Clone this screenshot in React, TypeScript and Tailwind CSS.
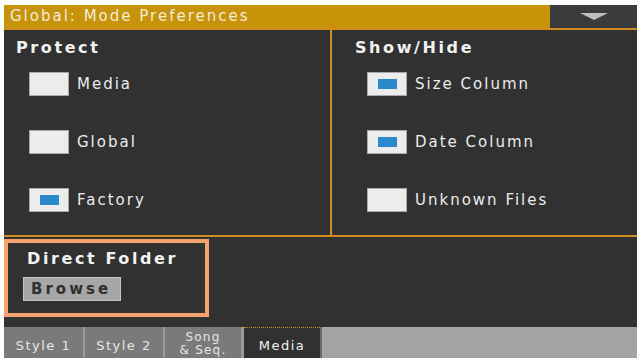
import React from "react";

const font = { fontFamily: '"DejaVu Sans", "Liberation Sans", sans-serif' };

function Check({ on, label }: { on: boolean; label: string }) {
  return (
    <div className="flex items-center h-[24px]">
      <div className="w-[40px] h-[24px] bg-[#ececec] border border-[#a9a9a9] flex items-center justify-center">
        {on && <div className="w-[19px] h-[10px] bg-[#2a8acb]" />}
      </div>
      <span className="ml-[8px] text-[15px] text-[#ececec] tracking-[2px]">{label}</span>
    </div>
  );
}

export default function App() {
  return (
    <div className="w-[643px] h-[364px] bg-white pt-[5px] pl-[4px]" style={font}>
      <div className="w-[633px] h-[353px] flex flex-col bg-[#313131]">
        {/* header */}
        <div className="h-[23px] flex bg-[#c79308] shrink-0">
          <div className="flex-1 flex items-center pl-[6px] text-[15px] text-[#f3ecd6] tracking-[2px]">
            Global: Mode Preferences
          </div>
          <div className="w-[87px] bg-[#3b3b3b] flex items-center justify-center">
            <svg width="28" height="8" viewBox="0 0 28 8">
              <polygon points="0,0 28,0 14,7" fill="#bdbdbd" />
            </svg>
          </div>
        </div>
        <div className="h-[2px] bg-[#d08d1d] shrink-0" />
        {/* main */}
        <div className="h-[205px] flex shrink-0">
          <div className="w-[326px] pl-[12px] pt-[6px]">
            <div className="text-[16px] font-bold text-[#f2f2f2] tracking-[2.6px]">Protect</div>
            <div className="pl-[13px] pt-[12px] flex flex-col gap-[34px]">
              <Check on={false} label="Media" />
              <Check on={false} label="Global" />
              <Check on={true} label="Factory" />
            </div>
          </div>
          <div className="w-[2px] bg-[#d08d1d]" />
          <div className="flex-1 pl-[23px] pt-[6px]">
            <div className="text-[16px] font-bold text-[#f2f2f2] tracking-[2.6px]">Show/Hide</div>
            <div className="pl-[12px] pt-[12px] flex flex-col gap-[34px]">
              <Check on={true} label="Size Column" />
              <Check on={true} label="Date Column" />
              <Check on={false} label="Unknown Files" />
            </div>
          </div>
        </div>
        <div className="h-[2px] bg-[#d08d1d] shrink-0" />
        {/* bottom area */}
        <div className="flex-1 pt-[2px]">
          <div className="w-[205px] h-[78px] border-[4px] border-[#f6a26f] pl-[15px] pt-[4px]">
            <div className="pl-[4px] text-[16px] font-bold text-[#f2f2f2] tracking-[2.6px]">Direct Folder</div>
            <div className="mt-[6px] w-[98px] h-[24px] bg-[#a6a6a6] border border-[#c4c4c4] flex items-center pl-[7px] text-[15px] font-bold text-[#2f2f2f] tracking-[3px]">
              Browse
            </div>
          </div>
        </div>
        {/* tabs */}
        <div className="h-[31px] flex shrink-0 bg-[#a3a3a3]">
          <div className="w-[79px] bg-[#7a7a7a] flex items-end justify-center pb-[3px] text-[13px] text-[#e6e6e6] tracking-[1.5px]">Style 1</div>
          <div className="w-[2px] bg-[#9a9a9a]" />
          <div className="w-[78px] bg-[#7a7a7a] flex items-end justify-center pb-[3px] text-[13px] text-[#e6e6e6] tracking-[1.5px]">Style 2</div>
          <div className="w-[2px] bg-[#9a9a9a]" />
          <div className="w-[76px] bg-[#7a7a7a] flex flex-col items-center justify-center pt-[2px] text-[12px] leading-[13px] text-[#e6e6e6] tracking-[1.2px]">
            <span>Song</span>
            <span>&amp; Seq.</span>
          </div>
          <div className="w-[3px] bg-[#9a9a9a]" />
          <div className="w-[76px] bg-[#313131] border-t border-dotted border-[#d08d1d] flex items-end justify-center pb-[3px] text-[13px] text-[#f2f2f2] tracking-[1.5px]">Media</div>
          <div className="w-[2px] bg-[#6a6a6a]" />
          <div className="flex-1" />
        </div>
      </div>
    </div>
  );
}
